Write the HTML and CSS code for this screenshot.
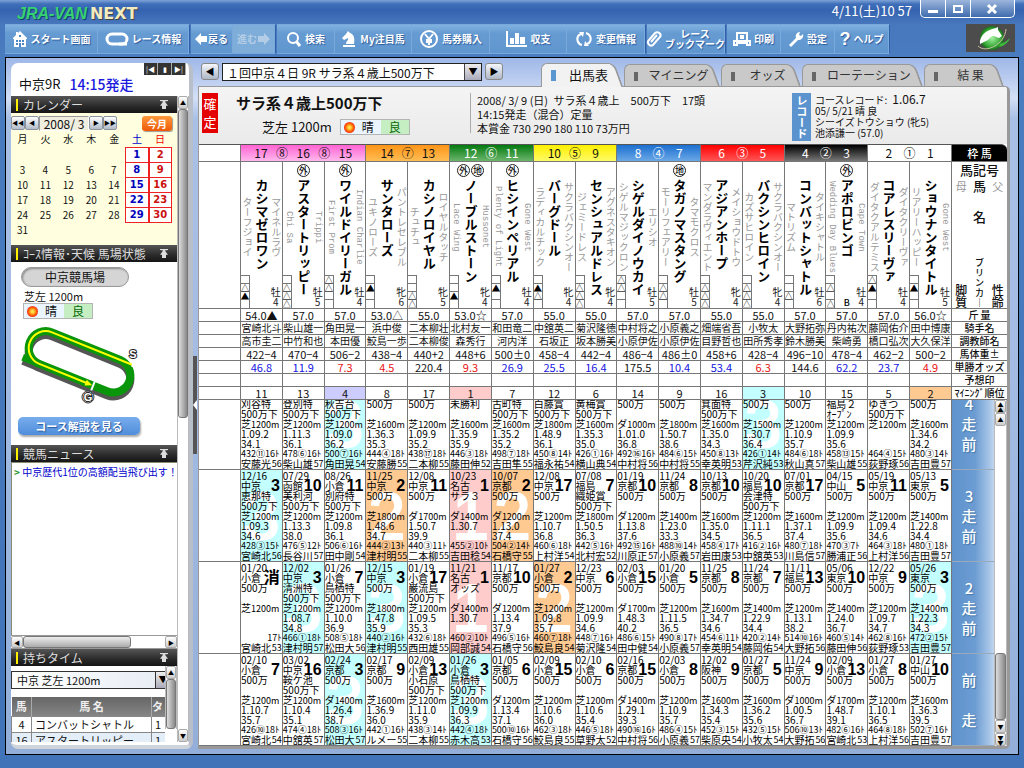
FILE: index.html
```html
<!DOCTYPE html>
<html lang="ja">
<head>
<meta charset="utf-8">
<title>JRA-VAN NEXT</title>
<link rel="stylesheet" href="styles.css">
</head>
<body>
<header class="titlebar">
  <h1 class="logo"><span class="logo-jra">JRA-VAN</span><span class="logo-next">NEXT</span></h1>
  <span class="clock">4/11(土)10 57</span>
  <div class="window-buttons">
    <button class="wbtn" aria-label="最小化"><svg width="24" height="17"><rect x="7" y="10" width="10" height="3" fill="#fff"/></svg></button>
    <button class="wbtn" aria-label="最大化"><svg width="24" height="17"><rect x="8" y="6" width="8" height="6" fill="none" stroke="#fff" stroke-width="2"/></svg></button>
    <button class="wbtn wclose" aria-label="閉じる"><svg width="42" height="17"><path d="M17 5l8 8M25 5l-8 8" stroke="#fff" stroke-width="3"/></svg></button>
  </div>
</header>

<nav class="toolbar">
  <div class="tgroup">
    <button class="tool w93"><svg width="16" height="18" viewBox="0 0 16 18"><path d="M8 1l7 7v1H1V8l3-3V2h2v1zM2 9h12v8H2z" fill="#fff"/><path d="M4 10h2v2H4zm3 0h2v2H7zm3 0h2v2h-2zM4 13h2v2H4zm6 0h2v2h-2zm-3 0h2v4H7zM7 5h2v2H7z" fill="#4d86c5"/></svg>スタート画面</button>
    <button class="tool w91"><svg width="24" height="14" viewBox="0 0 24 14"><rect x="2" y="2" width="20" height="10" rx="5" fill="none" stroke="#fff" stroke-width="3"/><path d="M14 12h8" stroke="#fff" stroke-width="3"/></svg>レース情報</button>
  </div>
  <div class="tgroup">
    <button class="tool w43"><svg width="12" height="12" viewBox="0 0 12 12"><path d="M0 6l6-6v3h6v6H6v3z" fill="#fff"/></svg>戻る</button>
    <button class="tool w43 off" disabled>進む<svg width="12" height="12" viewBox="0 0 12 12"><path d="M12 6L6 0v3H0v6h6v3z" fill="#b4cde6"/></svg></button>
  </div>
  <div class="tgroup">
    <button class="tool w58"><svg width="16" height="16" viewBox="0 0 16 16"><circle cx="7" cy="7" r="5" fill="none" stroke="#fff" stroke-width="2"/><path d="M10 10l4 5" stroke="#fff" stroke-width="3"/></svg>検索</button>
    <button class="tool w77"><svg width="16" height="16" viewBox="0 0 16 16"><path d="M2 14h12v2H2zM5 13c0-3 3-4 2-6L3 9 1 7l4-4 2-3 2 2c4 1 5 6 4 11z" fill="#fff"/></svg>My注目馬</button>
    <button class="tool w78"><svg width="20" height="20" viewBox="0 0 20 20"><circle cx="10" cy="10" r="8" fill="none" stroke="#fff" stroke-width="2"/><path d="M6 5l4 5 4-5M10 10v6M7 11h6M7 13h6" fill="none" stroke="#fff" stroke-width="2"/></svg>馬券購入</button>
    <button class="tool w77"><svg width="22" height="18" viewBox="0 0 22 18"><path d="M1 1v15h20" fill="none" stroke="#fff" stroke-width="2"/><path d="M4 8h4v6H4zm5-5h4v11H9zm5 4h5v7h-5z" fill="#fff"/></svg>収支</button>
    <button class="tool w78"><svg width="18" height="16" viewBox="0 0 18 16"><path d="M7 14A6 6 0 0 1 4 4l2-1M11 2a6 6 0 0 1 3 10l-2 1" fill="none" stroke="#fff" stroke-width="2"/><path d="M4 1l5 0-1 5zM14 15l-5 0 1-5z" fill="#fff"/></svg>変更情報</button>
  </div>
  <div class="tgroup">
    <button class="tool w78"><svg width="16" height="16" viewBox="0 0 16 16"><path d="M5 11l6-7M3 9l6-7c3-2 7 1 5 4l-7 8c-3 2-7-2-4-5z" fill="none" stroke="#fff" stroke-width="2"/></svg><span>レース<br>ブックマーク</span></button>
  </div>
  <div class="tgroup">
    <button class="tool w55"><svg width="18" height="16" viewBox="0 0 18 16"><path d="M4 10V2h10v8M7 5h4M7 7h4M1 14V10h16v4h-3v-2H4v2z" fill="none" stroke="#fff" stroke-width="2"/></svg>印刷</button>
    <button class="tool w55"><svg width="16" height="16" viewBox="0 0 16 16"><path d="M1 14l7-7c-1-3 1-6 4-6l-1 3 2 1 2-2c1 4-2 6-5 6l-7 7z" fill="#fff"/></svg>設定</button>
    <button class="tool w55"><b class="q">?</b>ヘルプ</button>
  </div>
  <svg class="emblem" width="49" height="28" viewBox="0 0 49 28"><defs><radialGradient id="orb"><stop offset="0" stop-color="#a4f0a0"/><stop offset=".75" stop-color="#35a835"/><stop offset="1" stop-color="#1c6a1c"/></radialGradient></defs><rect width="49" height="28" fill="#4c4c4c"/><circle cx="26" cy="14" r="12" fill="url(#orb)"/><path d="M14 20c-1-8 6-14 16-16l2-1v3l4 6-3 2-5-2c-3 0-4 2-6 4z" fill="#fff"/><path d="M12 22c8 8 27-2 28-17" fill="none" stroke="#c9c0a0" stroke-width="1"/><path d="M34 20c4-1 7-3 10-6-2 5-6 8-11 9z" fill="#3dbb3d"/></svg>
</nav>

<main class="frame">
  <aside class="side">
    <div class="side-top">
      <span class="race-no">中京9R</span><strong class="race-time">14:15発走</strong>
      <div class="side-nav"><button aria-label="先頭">|◀</button><button aria-label="停止">▮</button><button aria-label="末尾">▶|</button></div>
    </div>
    <div class="side-body">
      <div class="side-content">
        <section class="calendar">
          <h2 class="sec"><span>カレンダー</span><i class="fold"></i></h2>
          <div class="cal-nav">
            <button class="gbtn" aria-label="前年">◀◀</button><button class="gbtn" aria-label="前月">◀</button><span class="month">2008/ 3</span><button class="gbtn" aria-label="翌月">▶</button><button class="gbtn" aria-label="翌年">▶▶</button>
            <button class="this-month">今月</button>
          </div>
          <table class="cal">
            <thead><tr><th>月</th><th>火</th><th>水</th><th>木</th><th>金</th><th class="sat">土</th><th class="sun">日</th></tr></thead>
            <tbody id="days"></tbody>
          </table>
        </section>
        <section class="course">
          <h2 class="sec"><span>ｺｰｽ情報･天候 馬場状態</span><i class="fold"></i></h2>
          <div class="course-body">
            <button class="pill">中京競馬場</button>
            <p class="dist">芝左 1200m</p>
            <div class="weather"><span class="fine"><i class="sunicon"></i>晴</span><span class="good">良</span></div>
            <svg class="track" width="120" height="84" viewBox="0 0 120 84">
              <g fill="none" stroke="#555" transform="translate(56 37) rotate(22)">
                <rect x="-54" y="-17" width="107" height="34" rx="17" stroke-width="8"/>
                <path d="M-55 17h18" stroke-width="7"/>
              </g>
              <g fill="none" stroke="#0a960a" transform="translate(56 33) rotate(22)">
                <rect x="-54" y="-17" width="107" height="34" rx="17" stroke-width="8"/>
                <path d="M-55 17h18" stroke-width="7"/>
                <path d="M50-17H-37A17 17 0 0 0-37 17H16" stroke="#ff0" stroke-width="2"/>
                <path d="M13 14v6l7-3z" fill="#ff0" stroke="none"/>
                <path d="M21 13v9" stroke="#fff" stroke-width="2"/>
                <path d="M50-21v6" stroke="#fff" stroke-width="2"/>
              </g>
              <circle cx="64" cy="68" r="6" fill="#fff" stroke="#333"/>
              <text x="64" y="72" class="gs">G</text><text x="109" y="29" class="gs">S</text>
            </svg>
            <button class="explain">コース解説を見る</button>
          </div>
        </section>
        <section class="news">
          <h2 class="sec"><span>競馬ニュース</span><i class="fold"></i></h2>
          <div class="news-list"><a href="#news"><i>&gt;</i> 中京歴代1位の高額配当飛び出す！</a></div>
          <div class="hbar"><button class="sb" aria-label="左">◀</button><i class="thumb"></i><button class="sb" aria-label="右">▶</button></div>
        </section>
        <section class="times">
          <h2 class="sec"><span>持ちタイム</span><i class="fold"></i></h2>
          <div class="times-body">
            <div class="times-main">
              <div class="course-pick"><select aria-label="コース"><option>中京 芝左 1200m</option></select><i class="arrow">▼</i></div>
              <table class="tt"><thead><tr><th class="n">馬</th><th>馬 名</th><th class="t">タ</th></tr></thead>
              <tbody><tr><td class="n">4</td><td>コンバットシャトル</td><td class="t">1</td></tr><tr class="alt"><td class="n">16</td><td>アスタートリッピー</td><td class="t">1</td></tr></tbody></table>
            </div>
            <div class="vbar inner"><button class="sb" aria-label="上">▲</button><i class="thumb"></i></div>
          </div>
        </section>
      </div>
      <div class="vbar outer"><button class="sb" aria-label="上へ">▲</button><i class="thumb"></i><button class="sb end" aria-label="下へ">▼</button></div>
    </div>
  </aside>
  <button class="splitter" aria-label="サイドパネルを閉じる"><svg width="4" height="10" viewBox="0 0 4 10"><path d="M4 0v10L0 5z" fill="#fff"/></svg></button>

  <section class="main">
    <div class="main-top">
      <button class="rbtn" aria-label="前のレース">◀</button>
      <div class="race-pick"><select aria-label="レース"><option>１回中京４日 9R サラ系４歳上500万下</option></select><i class="arrow">▼</i></div>
      <button class="rbtn" aria-label="次のレース">▶</button>
      <div class="tabs">
        <button class="tab on t1">出馬表</button>
        <button class="tab t2">マイニング</button>
        <button class="tab t3">オッズ</button>
        <button class="tab t4">ローテーション</button>
        <button class="tab t5">結 果</button>
      </div>
    </div>
    <div class="sheet">
      <div class="race-head">
        <strong class="fixed-mark">確<br>定</strong>
        <div class="race-title">
          <h2>サラ系４歳上500万下</h2>
          <div class="sub"><span>芝左 1200m</span><div class="weather"><span class="fine"><i class="sunicon"></i>晴</span><span class="good">良</span></div></div>
        </div>
        <div class="race-info">2008/ 3/ 9 (日)&ensp;サラ系４歳上&emsp;500万下&emsp;17頭<br>14:15発走（混合）定量<br>本賞金 730 290 180 110 73万円</div>
        <strong class="rec-mark">レコード</strong>
        <div class="record">コースレコード:&ensp;<span>1.06.7</span><br>05/ 5/21 晴 良<br>シーイズトウショウ (牝5)<br>池添謙一 (57.0)</div>
      </div>
      <table class="entry" id="entry"></table>
      <div class="history">
        <table class="past" id="past"></table>
        <div class="vbar hist"><button class="sb" aria-label="先頭へ">▲<br>▲</button><button class="sb" aria-label="上へ">▲</button><i class="thumb"></i><button class="sb" aria-label="下へ">▼</button><button class="sb" aria-label="末尾へ">▼<br>▼</button></div>
      </div>
    </div>
  </section>
</main>
<script src="app.js"></script>
</body>
</html>
```

FILE: styles.css
```css
* { box-sizing: border-box; }
html, body { height: 100%; margin: 0; }
body {
  display: flex; flex-direction: column; overflow: hidden;
  padding: 0 5px 13px 5px;
  font: 11px/13px "Noto Sans CJK JP", "Liberation Sans", sans-serif;
  color: #111;
  background: linear-gradient(#7fa3d8 0, #3f6fb9 4px, #3563b0 10px, #4777bc 24px, #4a7cc0 60px, #4173b8 100%);
}
button, select { font: inherit; color: inherit; margin: 0; padding: 0; border: 0; background: none; }
h1, h2, p { margin: 0; }
i { font-style: normal; }

.titlebar { display: flex; height: 24px; flex: none; padding-left: 12px; }
.logo { display: flex; gap: 3px; flex: 1; font: bold 16px/27px "Liberation Sans", sans-serif; }
.logo-jra { color: #35d273; font-style: italic; text-shadow: 1px 1px 0 #14406a; }
.logo-next { color: #f3ecc0; font-family: "DejaVu Sans", sans-serif; text-shadow: 1px 1px 0 #444; }
.clock { color: #fff; font-size: 13px; line-height: 22px; padding-right: 8px; }
.window-buttons { display: flex; height: 18px; margin-right: 4px; border: 1px solid #fff; border-top: 0; border-radius: 0 0 5px 5px; background: linear-gradient(#9cb5dc, #3f6cae); }
.wbtn { display: flex; width: 25px; border-right: 1px solid #fff; }
.wclose { width: 43px; border-right: 0; }

.toolbar { display: flex; flex: none; height: 33px; gap: 1px; padding-bottom: 3px; }
.tgroup { display: flex; background: linear-gradient(#80b2e0, #669bd2 30%, #6096cf); border: 1px solid #79a9dc; border-width: 1px 0; border-right: 1px solid #2f5fa8; }
.tool { display: flex; align-items: center; justify-content: center; gap: 3px; color: #fff; font-weight: bold; font-size: 10px; line-height: 10px; white-space: nowrap; text-shadow: 1px 1px 1px #2a5a9c; border-right: 1px solid #79aadb; }
.tool svg { flex: none; }
.off { color: #b4cde6; background: #7fadda; text-shadow: none; }
.w93 { width: 93px; } .w91 { width: 91px; } .w43 { width: 42px; gap: 1px; } .w58 { width: 58px; }
.w77 { width: 77px; } .w78 { width: 78px; } .w55 { width: 54px; }
.q { font: bold 18px/18px "Liberation Sans", sans-serif; }
.emblem { margin-left: auto; margin-right: 4px; }

.frame { flex: 1; min-height: 0; display: flex; padding: 5px 8px 5px 5px; border: 1px solid #000; background: linear-gradient(#9fb8e8, #d3dff6 40px, #a9c0e6 60px, #a4bce4 300px, #93afd9); }

.side { display: flex; flex-direction: column; width: 182px; flex: none; background: #fff; border-right: 4px solid #b9bfc8; border-bottom: 4px solid #cfd3da; border-radius: 7px; padding-bottom: 3px; }
.side-top { display: flex; height: 33px; flex: none; align-items: flex-start; padding-left: 8px; font-size: 13px; white-space: nowrap; }
.side-top > * { line-height: 42px; }
.race-time { color: #1a1ae0; margin-left: 9px; font-size: 14px; font-weight: 500; }
.side-nav { display: flex; margin: 0 3px 0 auto; line-height: 10px; background: #333; height: 12px; }
.side-nav button { width: 14px; border-right: 1px solid #aaa; color: #fff; font-size: 7px; line-height: 8px; }
.side-body { flex: 1; min-height: 0; display: flex; }
.side-content { flex: 1; min-width: 0; display: flex; flex-direction: column; overflow: hidden; }
.sec { display: flex; align-items: center; justify-content: space-between; height: 17px; padding: 0 9px 0 5px; background: linear-gradient(#555, #2a2a2a 60%, #151515); color: #ddd; font-size: 12px; font-weight: 400; line-height: 17px; white-space: nowrap; }
.sec span { border-left: 2px solid #fe0; padding-left: 5px; line-height: 12px; }
.fold { width: 8px; height: 9px; border-top: 1px solid #ddd; background: #ddd; clip-path: polygon(0 0, 100% 0, 100% 12%, 60% 18%, 100% 65%, 75% 65%, 75% 100%, 25% 100%, 25% 65%, 0 65%, 40% 18%, 0 12%); }
.calendar { background: #ffffdf; height: 149px; flex: none; }
.cal-nav { display: flex; align-items: center; padding-top: 2px; height: 18px; }
.gbtn { width: 14px; height: 14px; border: 1px solid #8a94a0; border-radius: 2px; background: linear-gradient(#fff, #b3bcc8); font-size: 6px; line-height: 10px; white-space: nowrap; color: #000; }
.month { width: 50px; background: #f0eedf; border: 1px solid #999; border-color: #999 #fff #fff #999; font-size: 12px; line-height: 13px; text-align: center; }
.this-month { width: 30px; height: 15px; margin-left: auto; margin-right: 5px; border-radius: 3px; background: linear-gradient(#ff9a3c, #ee5a08); color: #fff; font-size: 10px; font-weight: bold; line-height: 13px; box-shadow: 1px 1px 1px #999; }
.cal { border-collapse: collapse; table-layout: fixed; width: 161px; text-align: center; font-size: 10px; }
.cal th { font-weight: 400; font-size: 10px; height: 16px; padding: 0; line-height: 14px; }
.cal td { height: 15px; padding: 0; line-height: 13px; }
.cal th.sat { color: #00c; } .cal th.sun { color: #e00; }
.cal td.sat, .cal td.sun { border: 1px solid #e22; background: #fff; font: bold 10px/13px "DejaVu Sans", sans-serif; }
.cal td.sat { color: #00b; } .cal td.sun { color: #c11; border-left: 2px solid #e22; }
.course { height: 200px; flex: none; }
.course-body { display: flex; flex-direction: column; align-items: flex-start; padding: 5px 0 0 7px; }
.pill { width: 108px; height: 20px; margin-left: 3px; border-radius: 10px; border: 1px solid #999; background: #d5d5d5; font-size: 12px; line-height: 16px; box-shadow: inset 1px 1px 2px #888; }
.dist { padding: 3px 0 0 6px; font-size: 11px; line-height: 12px; }
.weather { display: flex; height: 16px; border: 1px solid #b4b4b4; font-size: 12px; line-height: 14px; }
.course .weather { margin: 1px 0 0 5px; }
.fine { display: flex; align-items: center; gap: 7px; width: 40px; padding-left: 3px; background: #eaf5ff; }
.good { width: 28px; text-align: center; background: #c5efc2; color: #0a6a0a; }
.sunicon { width: 11px; height: 11px; border-radius: 50%; background: radial-gradient(#ffe04a 15%, #f60 50%, #e22 75%); }
.track { margin: 10px 0 0 6px; overflow: visible; }
.gs { font: bold 11px "Liberation Sans", sans-serif; text-anchor: middle; fill: #fff; stroke: #222; stroke-width: 2px; paint-order: stroke; }
.explain { width: 122px; height: 18px; margin-top: 4px; border-radius: 5px; background: linear-gradient(#78adec, #4f8ddb); color: #fff; font-weight: bold; line-height: 16px; text-shadow: 1px 1px 1px #2a5a9c; box-shadow: 1px 2px 2px #aaa; }
.news { flex: 1; min-height: 120px; display: flex; flex-direction: column; }
.news-list { flex: 1; padding: 2px; border: 1px solid #8a8a70; border-width: 1px 0 0 1px; overflow: hidden; white-space: nowrap; font-size: 10px; line-height: 14px; }
.news-list a { color: #00c; text-decoration: none; } .news-list i { color: #393; font-weight: bold; }
.times { height: 93px; flex: none; }
.times-body { display: flex; height: 76px; overflow: hidden; }
.times-main { flex: 1; min-width: 0; overflow: hidden; padding-top: 5px; }
.course-pick { display: flex; width: 160px; height: 18px; margin-bottom: 8px; border: 1px solid #333; }
.course-pick select { width: 144px; border-right: 1px solid #333; appearance: none; background: linear-gradient(90deg, #fff, #e9eef5); font-size: 11px; padding-left: 5px; }
.arrow { flex: 1; background: linear-gradient(#eee, #aab); color: #000; text-align: center; font-size: 9px; line-height: 16px; }
.tt { border-collapse: collapse; table-layout: fixed; width: 166px; }
.tt th { height: 19px; padding: 0; background: linear-gradient(#666, #858585); color: #eee; border-right: 1px solid #aaa; }
.tt td { height: 16px; padding: 0 0 0 3px; border: 1px solid #888; line-height: 13px; white-space: nowrap; overflow: hidden; }
.tt .n { width: 20px; text-align: center; padding: 0; } .tt .t { width: 25px; text-align: left; } .alt { background: #e4eef8; }

.vbar { display: flex; flex-direction: column; width: 12px; flex: none; background: #fff; border: 1px solid #bbb; border-width: 0 1px; }
.hbar { display: flex; height: 14px; background: #fff; border: 1px solid #999; border-width: 1px 0; }
.sb { width: 100%; height: 13px; flex: none; border: 1px solid #aaa; border-radius: 2px; background: linear-gradient(#fff, #ccc); color: #000; font-size: 6px; line-height: 5px; }
.thumb { border: 1px solid #777; border-radius: 3px; background: linear-gradient(90deg, #ddd, #aaa 60%, #888); }
.hbar .sb { width: 12px; height: 12px; } .hbar .thumb { width: 108px; margin-right: auto; background: linear-gradient(#eee, #aaa); }
.outer .thumb { height: 309px; } .outer .end { margin-top: auto; }
.inner { height: 63px; } .inner .thumb { flex: 1; }
.splitter { display: flex; align-items: center; width: 4px; height: 98px; margin-top: 293px; flex: none; background: #555; }

.main { flex: 1; min-width: 0; display: flex; flex-direction: column; }
.main-top { display: flex; height: 23px; flex: none; padding-left: 4px; gap: 3px; align-items: flex-start; }
.rbtn { width: 18px; height: 17px; border: 1px solid #888; border-radius: 3px; background: linear-gradient(#f4f6fa, #aeb8c6); color: #000; font-size: 9px; line-height: 14px; }
.race-pick { display: flex; width: 260px; height: 18px; border: 1px solid #222; background: #fff; }
.race-pick select { width: 242px; appearance: none; background: #fff; font-size: 12px; padding-left: 4px; border-right: 1px solid #444; }
.tabs { display: flex; flex: 1; justify-content: flex-end; height: 100%; padding-right: 7px; gap: 2px; }
.tab { position: relative; isolation: isolate; height: 22px; margin-top: 1px; padding: 0 4px 0 18px; font-size: 12px; line-height: 20px; color: #333; white-space: nowrap; }
.tab::before { content: ""; position: absolute; z-index: -1; inset: 0 12px 0 0; border: 1px solid #999; border-bottom: 0; border-right: 0; border-radius: 6px 0 0 0; background: linear-gradient(#666, #666) 9px 7px / 4px 9px no-repeat #c9c9c9; }
.tab::after { content: ""; position: absolute; z-index: -2; top: 0; bottom: 0; right: 3px; width: 20px; border: solid #999; border-width: 1px 2px 0 0; border-radius: 0 7px 0 0; background: #c9c9c9; transform: skewX(20deg); }
.tab.on { height: 24px; margin-top: 0; color: #111; font-size: 13px; }
.tab.on::before { background: linear-gradient(#5a96d0, #5a96d0) 9px 6px / 5px 11px no-repeat #f2f2f2; }
.tab.on::after { background: #f2f2f2; }
.t1 { width: 81px; } .t2 { width: 95px; } .t3 { width: 79px; } .t4 { width: 120px; } .t5 { width: 79px; }

.sheet { flex: 1; min-height: 0; display: flex; flex-direction: column; background: #ededed; border: 1px solid #999; border-right: 3px solid #999; border-bottom: 3px solid #999; border-radius: 0 5px 5px 0; overflow: hidden; margin-left: 1px; }
.race-head { display: flex; height: 57px; flex: none; background: linear-gradient(#f4f4f4, #eaeaea); padding: 6px 0 0 3px; }
.fixed-mark { width: 16px; height: 40px; flex: none; background: #e50000; color: #fff; font-size: 13px; font-weight: 400; line-height: 18px; text-align: center; padding-top: 2px; }
.race-title { width: 252px; padding-left: 18px; flex: none; }
.race-title h2 { font-size: 15px; line-height: 20px; white-space: nowrap; }
.sub { display: flex; gap: 8px; padding: 6px 0 0 26px; font-size: 13px; line-height: 15px; }
.race-info { flex: 1; height: 40px; border-left: 1px solid #aaa; padding-left: 6px; font-size: 11px; line-height: 14px; white-space: nowrap; }
.rec-mark { width: 19px; height: 48px; flex: none; background: #5b93cf; color: #fff; font-size: 11px; line-height: 19px; writing-mode: vertical-rl; text-align: center; }
.record { width: 196px; flex: none; padding-left: 4px; font-size: 10px; line-height: 11px; white-space: nowrap; }
.record span { font-size: 12px; }

.entry, .past { border-collapse: separate; border-spacing: 0; table-layout: fixed; width: 100%; background: #fff; }
.entry td, .entry th, .past td, .past th { padding: 0; border: 0 solid #777; border-width: 0 1px 1px 0; font-weight: 400; text-align: center; white-space: nowrap; overflow: hidden; }
.blank { width: 42px; } .label { width: 55px; }
.entry th.label { border-right: 0; }
.entry .head > * { height: 18px; border-top: 1px solid #555; }
.frame-no { display: flex; justify-content: center; font-size: 12px; line-height: 16px; }
.g3 span { width: 17%; } .g2 span { width: 25%; }
.f8 { background: linear-gradient(#ff62d2, #ffb8ee); } .f7 { background: linear-gradient(#ff9416, #ffbd55); }
.f6 { background: linear-gradient(#047a10, #6bb56b); color: #fff; } .f5 { background: linear-gradient(#ffef00, #fffb66); }
.f4 { background: linear-gradient(#1d6fd0, #6aa8e6); color: #fff; } .f3 { background: linear-gradient(#f00, #ff5656); color: #fff; }
.f2 { background: linear-gradient(#000, #777); color: #fff; } .f1 { background: #fff; }
.entry .head .label { background: #000; color: #fff; border-radius: 0 6px 0 0; font-weight: 500; }
.horse { display: grid; grid-template: 17px 1fr / 12px 1fr 12px; height: 146px; }
.sym { grid-column: 1 / 4; display: flex; justify-content: center; gap: 1px; align-items: center; }
.sym span { width: 13px; height: 13px; border: 1px solid #222; border-radius: 50%; font-size: 9px; line-height: 11px; font-weight: 500; }
.parent { display: flex; flex-direction: column; justify-content: space-between; color: #999; font-size: 10px; line-height: 12px; min-height: 0; }
.parent > span { writing-mode: vertical-rl; height: 96px; flex: none; }
.parent > .latin { font: 9px/12px "Liberation Mono", monospace; }
.hname { display: flex; flex-direction: column; justify-content: space-between; align-items: center; font-size: 13px; line-height: 16px; font-weight: bold; color: #000; }
.hname > span { writing-mode: vertical-rl; }
.hname > small { font-size: 9px; line-height: 10px; font-weight: 500; }
.sex { color: #222; line-height: 10px; flex: none; padding-bottom: 1px; }
.marks { width: 9px; flex: none; border: solid #777; border-width: 1px 1px 0 0; color: #000; font-size: 8px; line-height: 7px; }
.marks b { display: block; height: 8px; border-bottom: 1px solid #777; font-weight: 400; }
.marks b:last-child { border-bottom: 0; }
.nlabel { display: flex; flex-direction: column; height: 146px; align-items: stretch; font-weight: 500; font-size: 13px; line-height: 15px; }
.nlabel .big { display: grid; grid-template-columns: 1fr 1fr 1fr; flex: 1; line-height: 16px; padding-top: 1px; }
.nlabel .par { color: #999; font-size: 11px; font-weight: 400; }
.nlabel .mid { display: flex; flex-direction: column; gap: 15px; }
.nlabel .low { display: grid; grid-template-columns: 1fr 1fr 1fr; align-items: end; font-size: 12px; line-height: 12px; }
.nlabel .low .bl { font-size: 9px; line-height: 10px; }
.data > * { height: 13px; line-height: 12px; font-size: 11px; }
.data.person td { font-size: 10px; } .data .label { font-weight: 500; font-size: 10px; }
.blue { color: #1414e0; } .red { color: #e81414; }
.r1 { background: #ffcccc; } .r2 { background: #ffc992; } .r3 { background: #c4ffff; } .r4 { background: #ccccff; }
.history { display: flex; flex: 1; min-height: 0; }
.past { flex: 1; min-width: 0; }
.past .label { width: 42px; background: linear-gradient(90deg, #5f93cd 0, #6c9cd2 55%, #a9c6e8 90%, #c2d7ef); color: #fff; border-right: 0; border-bottom-color: #9ab; }
.clip { display: flex; flex-direction: column; justify-content: flex-end; height: 91px; overflow: hidden; }
.first .clip { height: 69px; }
.run { position: relative; isolation: isolate; height: 91px; flex: none; padding-top: 1px; font-size: 10px; line-height: 10px; text-align: left; color: #000; }
.run div { height: 10px; }
.run small { font-size: 9px; }
.run .place { display: flex; justify-content: space-between; padding-right: 2px; }
.run .place b { font: bold 16px/10px "Liberation Sans", "Noto Sans CJK JP", sans-serif; }
.run .lone { text-align: right; }
.run .load { font-size: 9px; }
.run .rider { display: flex; justify-content: space-between; }
.ghost { position: absolute; z-index: -1; right: 2px; top: 20px; font: 66px/52px "Liberation Sans", sans-serif; color: #fff; -webkit-text-stroke: 2px #fff; }
.rlabel { display: flex; flex-direction: column; justify-content: center; height: 91px; flex: none; padding-right: 8px; font-size: 15px; line-height: 20px; font-weight: 500; text-shadow: 1px 1px 1px #47a; }
.hist { width: 13px; } .hist .thumb { height: 67px; margin-top: auto; }
```

FILE: app.js
```js
// number, name, sire, dam, symbols, marks, sex, age, weight, jockey, trainer, body weight, odds, mining rank
const horses = `17,カシマゼロワン,マイネルラヴ,ターフジョイ,,-△▲-,牡,4,54.0▲,宮崎北斗,高市圭二,422−4,46.8,11
16,アスタートリッピー,Trippi,Chi Sa,外,-△△△,牡,5,57.0,柴山雄一,中竹和也,470−4,11.9,13
15,ワイルドイリーガル,Indian Charlie,First Prom,外,△△--,牡,4,57.0,角田晃一,本田優,506−2,7.3,4
14,サンタローズ,パントレセレブル,ユキノローズ,,-▲--,牝,6,53.0△,浜中俊,鮫島一歩,438−4,4.5,8
13,カシノロイヤル,ロイヤルタッチ,チュチュ,,--△△,牝,5,55.0,二本柳壮,二本柳俊,440+2,220.4,17
12,ノーブルストーン,Hussonet,Lace Wing,外地,--▲-,牝,4,53.0☆,北村友一,森秀行,448+6,9.3,1
11,ヒシインペリアル,Gone West,Plenty of Light,外,-▲--,牡,4,57.0,和田竜二,河内洋,500±0,26.9,7
10,バーグドール,サクラバクシンオー,ラディカルチック,,-▲△-,牝,4,55.0,中舘英二,石坂正,458−4,25.5,12
9,センシュアルドレス,アグネスタキオン,ジェミードレス,,-△△△,牝,4,55.0,菊沢隆徳,坂本勝美,442−4,16.4,6
8,シゲルダイノウカイ,エリシオ,シゲルマジックロン,,△△--,牡,5,57.0,中村将之,小原伊佐,486−4,175.5,14
7,タガノマスタング,タマモクロス,モーリフェアリー,地,-△△-,牡,5,57.0,小原義之,小原伊佐,486±0,10.4,9
6,アジアンホープ,メイショウドトウ,マンダラヴィエント,,-△△△,牝,4,55.0,畑端省吾,目野哲也,458+6,53.4,16
5,バクシンヒロイン,サクラバクシンオー,カズサヒロイン,,-△△△,牝,4,55.0,小牧太,田所秀孝,428−4,6.3,3
4,コンバットシャトル,タイキシャトル,マトリズム,,--△-,牡,6,57.0,大野拓弥,鈴木勝美,496−10,144.6,10
3,アポロビンゴ,Cape Town,Wedding Day Blues,外,-△-△,牡,4,57.0,丹内祐次,柴崎勇,478−4,62.2,15
2,コアレスリーヴァ,ダイタクリーヴァ,ダイタクアルテミス,,△▲--,牡,4,57.0,藤岡佑介,橋口弘次,462−2,23.7,5
1,ショウナンタイトル,Gone West,リアリーハッピー,,-▲--,牡,5,56.0☆,田中博康,大久保洋,500−2,4.9,2`
  .split("\n").map(line => line.split(","));

// date, place, finish, race, class, distance, time, last 3F, weight+position+field, jockey
const runs = {
"4走前": `,,,刈谷特,500万下,芝1200m,1.09.2,34.1,432⑪16ﾄ,安藤光56
,,,登別特,500万下,芝1200m,1.11.3,36.1,478⑥16ﾄ,柴山雄57
,,3,秋吉台,500万下,芝1200m,1.09.0,36.2,500⑦16ﾄ,角田晃54
,,,500万,,芝1600m,1.36.3,35.3,444④18ﾄ,安藤勝55
,,,500万,,芝1200m,1.09.9,35.2,438⑰18ﾄ,二本柳55
,,,未勝利,,芝1600m,1.35.9,35.9,446③18ﾄ,藤田伸52
,,,古町特,500万下,芝1600m,1.35.2,35.2,498⑦18ﾄ,吉田隼55
,,,白藤賞,500万下,芝1800m,1.48.9,36.1,450⑧14ﾄ,福永祐54
,,,黄梅賞,500万下,芝1600m,1.35.3,35.0,426①16ﾄ,横山典54
,,,500万,,ダ1000m,1.01.0,36.8,492⑯16ﾄ,中村将56
,,,500万,,芝1800m,1.50.7,38.6,484⑥15ﾄ,中村将55
,,,箕面特,500万下,芝1600m,1.35.0,34.3,450⑧13ﾄ,幸英明53
,,3,500万,,芝1500m,1.30.7,36.4,426①14ﾄ,芹沢純53
,,,500万,,芝1200m,1.10.9,35.7,484⑥18ﾄ,秋山真57
,,,福島２,ｵｰﾌﾟﾝ,芝1200m,1.09.9,35.6,458⑬15ﾄ,柴山雄55
,,,ゆきつ,500万下,芝1200m,,,464④15ﾄ,荻野琢56
,,,500万,,芝1600m,1.34.6,34.2,480③14ﾄ,吉田豊57`,
"3走前": `12/16,中京,3,恵那特,500万下,芝1200m,1.09.3,34.6,428③15ﾄ,宮崎北56
07/29,函館,10,美利河,500万下,芝1200m,1.13.3,38.0,476⑤12ﾄ,長谷川57
08/26,小倉,11,別府特,500万下,芝1200m,1.09.8,36.1,506⑥16ﾄ,田中剛54
11/25,中京,2,500万,,芝1800m,1.48.6,34.7,444②13ﾄ,津村明55
12/08,中京,11,500万,,ダ1700m,1.50.7,39.9,440③11ﾄ,二本柳55
10/23,名古,1,サラ３,,ダ1400m,1.30.7,,455②10ﾄ,吉田稔54
10/07,京都,2,500万,,ダ1200m,1.13.0,37.4,504②14ﾄ,石橋守55
12/08,中京,17,500万,,芝1200m,1.10.7,36.8,460⑥18ﾄ,上村洋54
07/08,福島,7,織姫賞,500万下,芝1800m,1.50.5,36.3,442⑤16ﾄ,北村宏52
01/19,京都,10,500万,,ダ1200m,1.13.8,37.6,492⑮16ﾄ,川原正57
11/24,京都,8,500万,,芝1400m,1.23.0,33.3,488⑩14ﾄ,小原義57
10/13,京都,10,500万,,芝1600m,1.35.0,34.5,458④17ﾄ,岩田康53
10/20,福島,10,会津特,500万下,芝1200m,1.11.1,36.5,416②16ﾄ,中舘英53
07/01,京都,17,500万,,芝1600m,1.37.1,37.4,480⑦18ﾄ,川島信57
04/15,中山,5,500万,,芝1200m,1.09.9,35.6,470③7ﾄ,勝浦正56
05/19,中京,11,500万,,芝1200m,1.09.4,34.6,464③18ﾄ,上村洋56
05/13,東京,5,500万,,芝1400m,1.22.8,34.4,480①18ﾄ,吉田豊57`,
"2走前": `01/20,小倉,消,500万,,芝1200m,,,17ﾄ,宮崎北53
12/02,中京,3,清洲特,500万下,芝1200m,1.08.7,34.8,466①18ﾄ,津村明57
01/26,小倉,7,鳥栖特,500万下,芝1200m,1.10.0,36.9,508⑤18ﾄ,松田大56
12/15,中京,3,500万,,芝1800m,1.47.8,35.9,440②16ﾄ,津村明55
01/19,小倉,17,巌流島,500万下,芝1200m,1.09.5,35.3,432⑥18ﾄ,西田雄55
11/21,名古,1,オッズ,,ダ1400m,1.30.7,,460②10ﾄ,岡部誠54
11/17,京都,10,500万,,ダ1200m,1.13.4,37.9,496⑤16ﾄ,石橋守56
01/27,小倉,2,500万,,芝1200m,1.09.8,35.7,460⑦18ﾄ,鮫島良54
12/23,中京,6,500万,,芝1200m,1.09.9,34.6,448⑦16ﾄ,菊沢隆54
02/03,小倉,15,500万,,ダ1700m,1.48.3,40.2,486⑥15ﾄ,田中健54
01/20,小倉,5,500万,,芝1200m,1.11.5,36.5,490⑧17ﾄ,小原義57
11/25,京都,8,500万,,芝1600m,1.34.7,34.6,454⑥11ﾄ,幸英明54
11/24,京都,7,500万,,芝1400m,1.22.9,34.4,420②14ﾄ,藤岡佑54
11/11,福島,13,500万,,芝1200m,1.13.1,38.2,514⑩16ﾄ,大野拓56
05/06,東京,10,500万,,芝1400m,1.24.0,36.7,460⑤14ﾄ,藤田伸56
12/22,中京,9,500万,,芝1200m,1.09.7,34.7,462⑧16ﾄ,荻野琢53
05/26,東京,3,500万,,芝1400m,1.22.3,34.3,472②15ﾄ,吉田豊57`,
"前　走": `02/10,小倉,7,500万,,芝1200m,1.10.7,35.7,426⑩18ﾄ,宮崎北54
03/02,中京,16,鞍ケ池,500万下,芝1200m,1.10.4,35.1,474④18ﾄ,中舘英57
02/24,京都,3,500万,,ダ1400m,1.26.4,38.7,508③16ﾄ,松田大57
02/17,京都,9,500万,,芝1600m,1.36.9,36.0,442①16ﾄ,ルメー55
02/09,小倉,13,小石原,500万下,芝1200m,1.11.0,35.9,438③14ﾄ,二本柳55
01/26,小倉,3,鳥栖特,500万下,芝1200m,1.09.9,36.3,442④18ﾄ,赤木高53
01/05,京都,6,500万,,ダ1200m,1.13.4,37.1,500⑩16ﾄ,石橋守56
02/09,小倉,15,500万,,芝1200m,1.10.6,36.0,462③18ﾄ,鮫島良55
02/10,小倉,6,500万,,芝1200m,1.10.6,35.4,446⑤18ﾄ,草野太52
02/16,京都,15,500万,,ダ1400m,1.29.1,39.3,490⑯16ﾄ,中村将56
02/03,小倉,8,500万,,芝1200m,1.10.9,35.7,486④15ﾄ,小原義57
12/02,阪神,9,500万,,芝1600m,1.34.3,35.4,452③15ﾄ,柴原央54
01/27,京都,5,500万,,芝1600m,1.36.2,35.6,432⑤15ﾄ,小牧太54
11/24,中京,9,500万,,ダ1000m,1.00.5,36.7,506⑩13ﾄ,大野拓56
02/09,小倉,13,500万,,ダ1700m,1.48.7,39.1,482⑥16ﾄ,宮崎北53
01/27,小倉,8,500万,,芝1200m,1.10.1,36.5,464⑧18ﾄ,上村洋56
01/27,中山,10,500万,,芝1600m,1.36.3,39.5,502⑦16ﾄ,吉田豊57`
};

const groups = [[8, 17, 16, 15], [7, 14, 13], [6, 12, 11], [5, 10, 9], [4, 8, 7], [3, 6, 5], [2, 4, 3], [1, 2, 1]];
const circled = "①②③④⑤⑥⑦⑧";

function parent(name) {
  return `<span class="${/^[A-Z]/.test(name) ? "latin" : "kana"}">${name}</span>`;
}

function horseCell(h) {
  const marks = [...h[5]].map(m => `<b>${m === "-" ? "" : m}</b>`).join("");
  const symbols = [...h[4]].map(s => `<span>${s}</span>`).join("");
  return `<td><div class="horse"><div class="sym">${symbols}</div>
    <div class="parent">${parent(h[3])}<div class="marks">${marks}</div></div>
    <div class="hname"><span>${h[1]}</span>${h[0] === "3" ? "<small>B</small>" : ""}</div>
    <div class="parent">${parent(h[2])}<div class="sex">${h[6]}<br>${h[7]}</div></div></div></td>`;
}

function dataRow(label, index, kind, style) {
  const cells = horses.map(h => {
    const value = index === null ? "" : h[index];
    return `<td class="${style ? style(value) : ""}">${value}</td>`;
  }).join("");
  return `<tr class="data ${kind}"><td></td>${cells}<th class="label">${label}</th></tr>`;
}

const header = groups.map(([frame, ...nums]) =>
  `<th class="f${frame}" colspan="${nums.length}"><div class="frame-no g${nums.length}">` +
  nums.map(n => `<span>${n}</span>`).join(`<span>${circled[frame - 1]}</span>`) + "</div></th>").join("");

const nameLabel = `<th class="label"><div class="nlabel"><div>馬記号</div>
  <div class="big"><span class="par">母</span><div class="mid"><span>馬</span><span>名</span></div><span class="par">父</span></div>
  <div class="low"><span>脚<br>質</span><span class="bl">ブ<br>リ<br>ン<br>カ<br>｜</span><span>性<br>齢</span></div></div></th>`;

document.getElementById("entry").innerHTML =
  `<colgroup><col class="blank">${"<col>".repeat(17)}<col class="label"></colgroup>` +
  `<tr class="head"><td></td>${header}<th class="label">枠 馬</th></tr>` +
  `<tr><td></td>${horses.map(horseCell).join("")}${nameLabel}</tr>` +
  dataRow("斤 量", 8, "") + dataRow("騎手名", 9, "person") + dataRow("調教師名", 10, "person") +
  dataRow("馬体重±", 11, "") +
  dataRow("単勝オッズ", 12, "", v => v < 10 ? "red" : v < 100 ? "blue" : "") +
  dataRow("予想印", null, "") +
  dataRow("ﾏｲﾆﾝｸﾞ順位", 13, "", v => v <= 4 ? "r" + v : "");

function runCell(line) {
  const [date, place, rank, race, grade, dist, time, last, load, rider] = line.split(",");
  const placed = ["1", "2", "3"].includes(rank);
  return `<td class="${placed ? "r" + rank : ""}"><div class="clip"><div class="run">
    ${placed ? `<span class="ghost">${rank}</span>` : ""}
    <div>${date}</div><div class="place">${place}${date ? `<b>${rank}</b>` : ""}</div>
    <div>${race}</div><div>${grade}</div>
    <div>${dist[0]}<small>${dist.slice(1)}</small></div>
    <div>${time}</div><div>${last}</div>
    <div class="load ${load.length < 4 ? "lone" : ""}">${load}</div>
    <div class="rider">${rider.slice(0, -2)}<small>${rider.slice(-2)}</small></div></div></div></td>`;
}

document.getElementById("past").innerHTML =
  `<colgroup><col class="blank">${"<col>".repeat(17)}<col class="label"></colgroup>` +
  Object.entries(runs).map(([label, text], i) =>
    `<tr class="${i === 0 ? "first" : "full"}"><td></td>${text.split("\n").map(runCell).join("")}` +
    `<th class="label"><div class="clip"><div class="rlabel">${[...label].map(c => `<span>${c}</span>`).join("")}</div></div></th></tr>`).join("");

let days = "";
for (let week = 0; week < 6; week++) {
  days += "<tr>";
  for (let d = 0; d < 7; d++) {
    const n = week * 7 + d - 4;
    const kind = n < 1 || n > 31 ? "" : d === 5 ? "sat" : d === 6 ? "sun" : "";
    days += `<td class="${kind}">${n < 1 || n > 31 ? "" : n}</td>`;
  }
  days += "</tr>";
}
document.getElementById("days").innerHTML = days;
```
